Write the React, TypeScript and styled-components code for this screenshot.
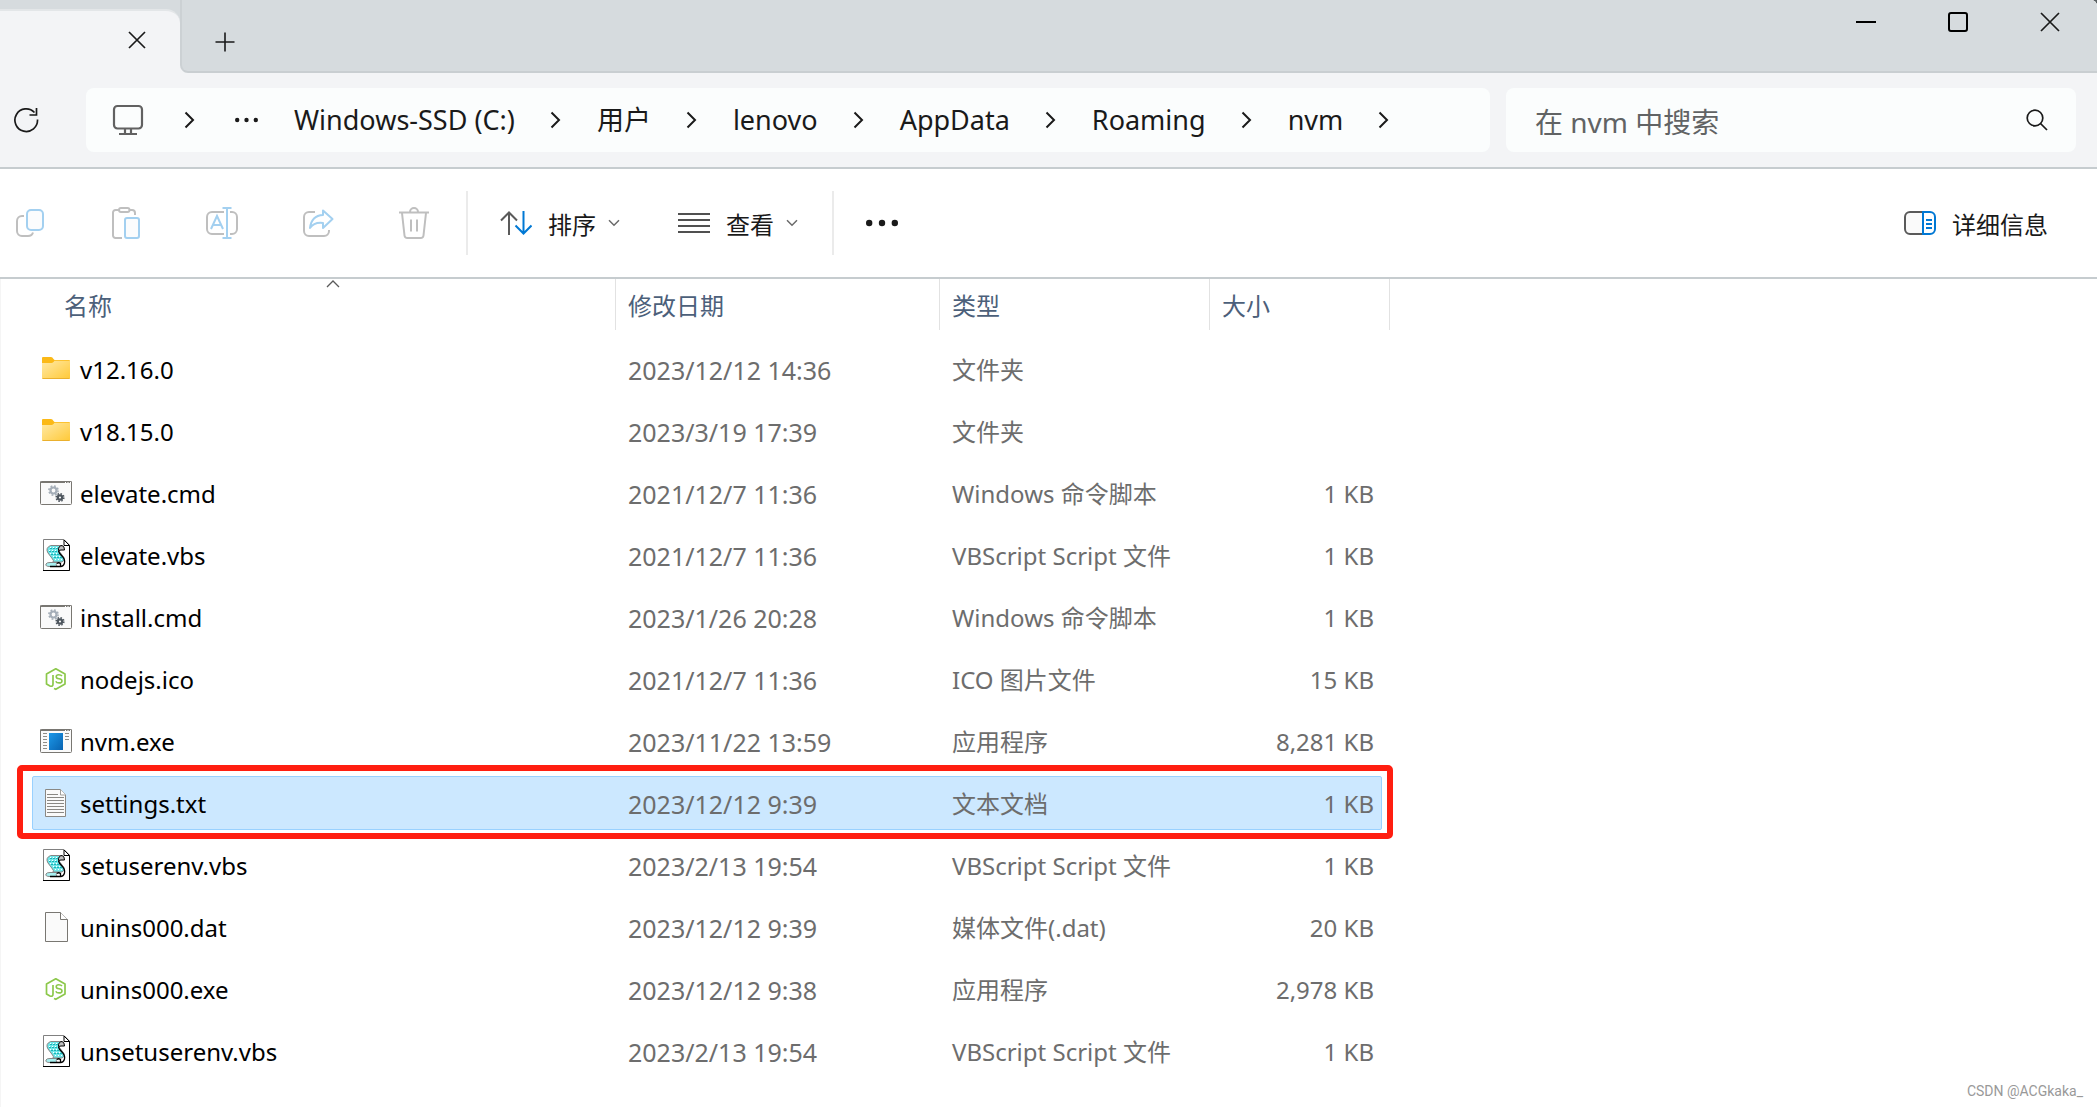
import React from "react";
import styled, { createGlobalStyle, css } from "styled-components";

const uiFont = `"Noto Sans", "Noto Sans CJK SC", sans-serif`;

const GlobalStyle = createGlobalStyle`
  *, *::before, *::after { box-sizing: border-box; }
  html, body, #root { min-height: 100vh; }
  body {
    margin: 0;
    background: #5a6164;
    font-family: ${uiFont};
    font-size: 24px;
    line-height: 32px;
    color: #1a1a1a;
  }
  button, input { font: inherit; color: inherit; }
  svg { display: block; flex: none; }
`;

const Window = styled.div`
  position: relative;
  display: flex;
  flex-direction: column;
  min-height: 100vh;
  overflow: hidden;
  background: #ffffff;
  border-top-right-radius: 6px;
`;

const PlainButton = styled.button`
  display: inline-flex;
  align-items: center;
  justify-content: center;
  margin: 0;
  padding: 0;
  border: 0;
  background: none;
  white-space: nowrap;
`;

const TitleBar = styled.header`
  display: flex;
  align-items: stretch;
  height: 73px;
  background: #f3f4f6;
`;

const TabEdge = styled.div`
  flex: none;
  width: 180px;
  padding-top: 9px;
  background: #d6dbde;
`;

const Tab = styled.div`
  display: flex;
  justify-content: flex-end;
  height: 64px;
  padding: 11px 23px 0 0;
  border-top: 2px solid #e3e6e8;
  border-top-right-radius: 14px;
  background: #f3f4f6;
`;

const TabStrip = styled.div`
  display: flex;
  flex: 1;
  justify-content: space-between;
  border-left: 2px solid #ccd1d4;
  border-bottom: 2px solid #c9ced1;
  border-bottom-left-radius: 8px;
  background: #d6dbde;
`;

const TabButton = styled(PlainButton)`
  width: 40px;
  height: 36px;
`;

const NewTabButton = styled(PlainButton)`
  width: 40px;
  height: 40px;
  margin: 22px 0 0 23px;
`;

const WindowControls = styled.div`
  display: flex;
  height: 44px;
  padding-right: 1px;
`;

const WindowControl = styled(PlainButton)`
  width: 92px;
`;

const AddressRow = styled.div`
  display: grid;
  grid-template-columns: 64px 1404fr 570fr;
  align-items: center;
  gap: 16px;
  height: 96px;
  padding: 0 21px 0 6px;
  border-bottom: 2px solid #c6cccf;
  background: #f3f4f6;
`;

const RefreshButton = styled(PlainButton)`
  width: 40px;
  height: 40px;
`;

const Field = css`
  display: flex;
  align-items: center;
  min-width: 0;
  height: 64px;
  border-radius: 8px;
  background: #fbfdfd;
  line-height: 36px;
`;

const AddressBar = styled.nav`
  ${Field}
  padding-left: 26px;
  overflow: hidden;
  font-size: 27px;
`;

const DeviceButton = styled(PlainButton)`
  margin-right: 40px;
`;

const OverflowButton = styled(PlainButton)`
  margin: 0 36px 0 40px;
`;

const Crumb = styled(PlainButton)`
  padding: 0 35px 0 36px;
  &:first-of-type { padding-left: 0; }
`;

const Crumbs = styled.div`
  display: flex;
  align-items: center;
`;

const SearchBox = styled.label`
  ${Field}
  padding: 0 28px 0 29px;
  font-size: 28px;
`;

const SearchInput = styled.input`
  flex: 1;
  min-width: 0;
  padding: 4px 0 0;
  border: 0;
  outline: 0;
  background: none;
  &::placeholder { color: #616364; opacity: 1; }
`;

const CommandBar = styled.div`
  display: flex;
  align-items: center;
  height: 110px;
  padding: 0 49px 0 10px;
  border-bottom: 2px solid #c6cccf;
`;

const IconGroup = styled.div`
  display: flex;
  gap: 56px;
  margin-right: 32px;
`;

const CommandIcon = styled(PlainButton)`
  width: 40px;
  height: 40px;
`;

const Divider = styled.div`
  width: 2px;
  height: 64px;
  background: #ebebeb;
`;

const MenuGroup = styled.div`
  display: flex;
  gap: 58px;
  padding: 0 34px 0 32px;
`;

const MenuButton = styled(PlainButton)`
  gap: 16px;
`;

const ButtonText = styled.span`
  padding-top: 3px;
`;

const MenuLabel = styled.span`
  display: flex;
  align-items: center;
  gap: 12px;
`;

const MoreButton = styled(PlainButton)`
  margin-left: 32px;
`;

const DetailsButton = styled(MenuButton)`
  margin-left: auto;
`;

const FileArea = styled.main`
  flex: 1;
  padding-bottom: 16px;
  border-left: 1px solid #f5f5f5;
`;

const FileTable = styled.table`
  display: block;
  width: 1389px;
`;

const TableHead = styled.thead`
  display: block;
`;

const HeadRow = styled.tr`
  display: grid;
  grid-template-columns: 615px 324px 270px 1fr;
`;

const HeadCell = styled.th<{ $inset?: boolean }>`
  position: relative;
  height: 51px;
  padding: 11px 0 0 ${(p) => (p.$inset ? "63px" : "12px")};
  border-right: 1px solid #e2e2e2;
  color: #4c607a;
  font-weight: 400;
  text-align: left;
`;

const SortMark = styled.svg`
  position: absolute;
  top: 0;
  left: 50%;
  margin-left: 18px;
`;

const TableBody = styled.tbody`
  display: grid;
  gap: 8px;
  padding: 12px 8px 0 31px;
`;

const Row = styled.tr<{ $selected?: boolean }>`
  position: relative;
  display: grid;
  grid-template-columns: 583px 324px 270px 1fr;
  height: 54px;
  border: 1px solid ${(p) => (p.$selected ? "#99d1ff" : "transparent")};
  border-radius: 2px;
  background: ${(p) => (p.$selected ? "#cce8ff" : "none")};
`;

const Cell = styled.td`
  display: flex;
  align-items: center;
  padding: 2px 0 0 12px;
  color: #6d6d6d;
  white-space: nowrap;
`;

const NameCell = styled(Cell)`
  gap: 8px;
  padding-left: 7px;
  color: #000000;

  svg { margin-top: -2px; }
`;

const DateCell = styled(Cell)`
  font-size: 25px;
`;

const SizeCell = styled(Cell)`
  justify-content: flex-end;
  padding-right: 7px;
`;

const RedFrame = styled.span`
  position: absolute;
  inset: -12px -12px -10px -16px;
  border: 6px solid #ff1e10;
  border-radius: 5px;
  pointer-events: none;
`;

const Watermark = styled.div`
  position: absolute;
  right: 14px;
  bottom: 7px;
  color: #999999;
  font-family: Roboto, sans-serif;
  font-size: 14px;
  line-height: 18px;
`;

const GREY = "#bfbfbf";
const PALE_BLUE = "#a3d0f0";
const DARK = "#1a1a1a";

const Cross = ({ size }: { size: number }) => (
  <svg width={size} height={size} viewBox={`0 0 ${size} ${size}`} stroke={DARK} strokeWidth="1.7">
    <path d={`M1 1L${size - 1} ${size - 1}M${size - 1} 1L1 ${size - 1}`} />
  </svg>
);

const Chevron = () => (
  <svg width="11" height="18" viewBox="0 0 11 18" fill="none" stroke={DARK} strokeWidth="2">
    <path d="M1.5 1.5L9 9L1.5 16.5" />
  </svg>
);

const SmallDown = () => (
  <svg width="12" height="8" viewBox="0 0 12 8" fill="none" stroke="#6a6a6a" strokeWidth="1.5">
    <path d="M1 1.2L6 6.2L11 1.2" />
  </svg>
);

const CopyIcon = () => (
  <svg width="32" height="32" viewBox="0 0 32 32" fill="none" strokeWidth="2">
    <path stroke={GREY} d="M10 9H8a5 5 0 0 0-5 5v10a5 5 0 0 0 5 5h6q4 0 5-3.5" />
    <rect x="13" y="3" width="16" height="20" rx="4" fill="#fbfcfd" stroke={PALE_BLUE} />
  </svg>
);

const PasteIcon = () => (
  <svg width="32" height="32" viewBox="0 0 32 32" fill="none" strokeWidth="2">
    <path stroke={GREY} d="M9 3H5.500a2.500 2.500 0 0 0-2.500 2.500V28.500a2.500 2.500 0 0 0 2.500 2.500H12M19.500 3H22a3 3 0 0 1 3 3v2" />
    <rect stroke={GREY} x="9" y="1" width="10.5" height="4" rx="2" />
    <rect x="15" y="11" width="14" height="20" rx="2" fill="#fbfcfd" stroke={PALE_BLUE} />
  </svg>
);

const RenameIcon = () => (
  <svg width="32" height="32" viewBox="0 0 32 32" fill="none" strokeWidth="2">
    <path stroke={GREY} d="M18 5H6a5 5 0 0 0-5 5v12a5 5 0 0 0 5 5h12M24 5h2a5 5 0 0 1 5 5v12a5 5 0 0 1-5 5h-2" />
    <path stroke={PALE_BLUE} d="M5 22L11 9L17 22M7 18h8M21 1v30M16.5 1h9M16.5 31h9" />
  </svg>
);

const ShareIcon = () => (
  <svg width="32" height="32" viewBox="0 0 32 32" fill="none" strokeWidth="2">
    <path stroke={GREY} d="M13 5H7a5 5 0 0 0-5 5v14a5 5 0 0 0 5 5h15a5 5 0 0 0 5-5v-1" />
    <path stroke={PALE_BLUE} strokeLinejoin="round" d="M21 3.500L30.500 12L21 21V16Q12 15 8 21Q9.500 8.500 21 8Z" />
  </svg>
);

const TrashIcon = () => (
  <svg width="32" height="32" viewBox="0 0 32 32" fill="none" stroke={GREY} strokeWidth="2">
    <path d="M1 5.500h30M12 5a4 4 0 0 1 8 0M4 6l2.500 22.500q.3 2.500 2.800 2.500h13.400q2.500 0 2.800-2.500L28 6M13 12.500v12M19 12.500v12" />
  </svg>
);

const SortIcon = () => (
  <svg width="32" height="32" viewBox="0 0 32 32" fill="none" strokeWidth="2">
    <path stroke="#5a5a5a" d="M9 28V5M1 13.5L9 5.5L17 13.5" />
    <path stroke="#0078d4" d="M23.5 4V27M15.5 18.5L23.5 26.5L31.5 18.5" />
  </svg>
);

const ViewIcon = () => (
  <svg width="32" height="32" viewBox="0 0 32 32" stroke="#505050" strokeWidth="2">
    <path d="M0 7h32M0 13h32M0 19h32M0 25h32" />
  </svg>
);

const DetailsIcon = () => (
  <svg width="32" height="32" viewBox="0 0 32 32" fill="none" strokeWidth="2">
    <path stroke="#5a5a5a" fill="#fafafa" d="M19 5H6a5 5 0 0 0-5 5v12a5 5 0 0 0 5 5h13" />
    <path stroke="#0078d4" d="M19 5h7a5 5 0 0 1 5 5v12a5 5 0 0 1-5 5h-7zM22 13h6M22 17h6M22 21h6" />
  </svg>
);

const Dots = ({ radius, gap }: { radius: number; gap: number }) => {
  const width = gap * 2 + radius * 2;
  return (
    <svg width={width} height="8" viewBox={`0 0 ${width} 8`} fill={DARK}>
      {[0, 1, 2].map((i) => (
        <circle key={i} cx={radius + i * gap} cy="4" r={radius} />
      ))}
    </svg>
  );
};

const FolderIcon = () => (
  <svg width="32" height="32" viewBox="0 0 32 32">
    <defs>
      <linearGradient id="folder" x1="0" y1="0" x2="1" y2="1">
        <stop offset="0" stopColor="#ffe9a6" />
        <stop offset="1" stopColor="#ffc937" />
      </linearGradient>
    </defs>
    <path fill="#fbb917" d="M2 5q0-1 1-1h8q1.500 0 2.500 2l1 1h14.500q1 0 1 1v6H2z" />
    <path fill="url(#folder)" d="M2 10h9.500q1 0 2-1l1-1.200H30V25q0 1-1 1H3q-1 0-1-1z" />
    <path fill="none" stroke="#eab02e" d="M2.500 25.500h27" />
  </svg>
);

const Gear = ({ x, y, r, color }: { x: number; y: number; r: number; color: string }) => (
  <g fill="none" stroke={color}>
    <circle cx={x} cy={y} r={r} strokeWidth="2.2" />
    <circle cx={x} cy={y} r={r + 1.6} strokeWidth="1.6" strokeDasharray={`${(r + 1.6) * 0.393} ${(r + 1.6) * 0.393}`} />
  </g>
);

const AppFrame = ({ children }: { children: React.ReactNode }) => (
  <svg width="32" height="32" viewBox="0 0 32 32">
    <rect x=".5" y="4.5" width="31" height="23" rx="1" fill="#fafafa" stroke="#797772" />
    <path fill="#797772" d="M0 4.500h32v1.500H0z" />
    <path stroke="#ffffff" d="M25 5.500h1M27.500 5.500h1M30 5.500h1" />
    {children}
  </svg>
);

const CmdIcon = () => (
  <AppFrame>
    <Gear x={13.5} y={13.5} r={3} color="#a5aeb8" />
    <Gear x={20} y={20.5} r={2.2} color="#4e565e" />
  </AppFrame>
);

const ExeIcon = () => (
  <AppFrame>
    <defs>
      <linearGradient id="screen" x1="0" y1="0" x2="1" y2="1">
        <stop offset="0" stopColor="#1c98e8" />
        <stop offset="1" stopColor="#0862b0" />
      </linearGradient>
    </defs>
    <rect x="9" y="8" width="14" height="17" fill="url(#screen)" />
    <path stroke="#8f8d88" d="M3 8.500h4M3 11.500h4M3 14.500h4M3 17.500h4M3 20.500h4M3 23.500h4M25 8.500h4M25 11.500h4M25 14.500h4" />
  </AppFrame>
);

const VbsIcon = () => (
  <svg width="32" height="32" viewBox="0 0 32 32">
    <path fill="#ffffff" stroke="#808080" d="M3.500 31.500V.5H24l5.500 5.500v25.500z" />
    <path fill="none" stroke="#000000" d="M3 31.500h26.500V6.500H24V1L29.500 6.500" />
    <path fill="#6fe6e8" stroke="#868686" d="M10.500 6.500h11.500q-4 2-3 5.500l5 6.500q1.500 3-2 4.500h-9q1-1.500-.5-3l-4.500-6q-3-5 2.500-7.500z" />
    <path fill="none" stroke="#18b4b8" strokeDasharray="2 1" d="M10 9.500h8M9 12.500h9M11 15.500h9M14 18.500h8" />
    <path fill="none" stroke="#ffffff" strokeDasharray="1 2" d="M10 8.500h8M9 11.500h9M10 14.500h9M13 17.500h9M15 20.500h8" />
    <path fill="#a8f0f1" stroke="#868686" d="M10 23.500h7q-1.500 2 0 4H10q-5 0-4-2.500.5-1.500 4-1.500z" />
    <path fill="#c0c0c0" stroke="#000000" d="M18.500 11.500Q18 7 22 6.500q2.500.5 2.500 4.500h-3.500z" />
    <path fill="none" stroke="#000000" strokeWidth="1.3" d="M18.500 12q.5 2 3 4.500 4 4 3 7.500-1 3.500-4 3.500H10M17 24.500q1.500-1.500 3.500 0v3" />
  </svg>
);

const NodeIcon = () => (
  <svg width="32" height="32" viewBox="0 0 32 32" fill="none" stroke="#8cc84b" strokeLinejoin="round">
    <path strokeWidth="1.7" d="M14 25.500L15.800 26.300L25 21V11L15.800 5.800L6.500 11V21L10 23q3 1 3-2V12" />
    <path strokeWidth="1.6" d="M22 13q-1-1.300-3.200-1.300-2.600 0-2.600 2 0 1.700 2.800 2 3 .3 3 2.200 0 2-3 2-2.500 0-3.200-1.700" />
  </svg>
);

const TxtIcon = () => (
  <svg width="32" height="32" viewBox="0 0 32 32">
    <path fill="#fafafa" stroke="#8a8884" d="M5.500 2.500H20.500L25.500 8V29.500H5.500z" />
    <path fill="#ffffff" stroke="#a09e9a" d="M20.500 2.500V8h5" />
    <path stroke="#8a8884" d="M7 7.500h11M7 10.500h17M7 13.500h17M7 16.500h17M7 19.500h17M7 22.500h17M7 25.500h17" />
  </svg>
);

const BlankIcon = () => (
  <svg width="32" height="32" viewBox="0 0 32 32" stroke="#797772">
    <path fill="#fafafa" d="M5.500 1.500H20.500L27.500 8.500V30.500H5.500z" />
    <path fill="#ffffff" d="M20.500 1.500V8.500h7" />
  </svg>
);

const icons = {
  folder: FolderIcon,
  cmd: CmdIcon,
  vbs: VbsIcon,
  node: NodeIcon,
  exe: ExeIcon,
  txt: TxtIcon,
  blank: BlankIcon,
};

type FileEntry = {
  icon: keyof typeof icons;
  name: string;
  date: string;
  type: string;
  size: string;
  selected?: boolean;
};

const files: FileEntry[] = [
  { icon: "folder", name: "v12.16.0", date: "2023/12/12 14:36", type: "文件夹", size: "" },
  { icon: "folder", name: "v18.15.0", date: "2023/3/19 17:39", type: "文件夹", size: "" },
  { icon: "cmd", name: "elevate.cmd", date: "2021/12/7 11:36", type: "Windows 命令脚本", size: "1 KB" },
  { icon: "vbs", name: "elevate.vbs", date: "2021/12/7 11:36", type: "VBScript Script 文件", size: "1 KB" },
  { icon: "cmd", name: "install.cmd", date: "2023/1/26 20:28", type: "Windows 命令脚本", size: "1 KB" },
  { icon: "node", name: "nodejs.ico", date: "2021/12/7 11:36", type: "ICO 图片文件", size: "15 KB" },
  { icon: "exe", name: "nvm.exe", date: "2023/11/22 13:59", type: "应用程序", size: "8,281 KB" },
  { icon: "txt", name: "settings.txt", date: "2023/12/12 9:39", type: "文本文档", size: "1 KB", selected: true },
  { icon: "vbs", name: "setuserenv.vbs", date: "2023/2/13 19:54", type: "VBScript Script 文件", size: "1 KB" },
  { icon: "blank", name: "unins000.dat", date: "2023/12/12 9:39", type: "媒体文件(.dat)", size: "20 KB" },
  { icon: "node", name: "unins000.exe", date: "2023/12/12 9:38", type: "应用程序", size: "2,978 KB" },
  { icon: "vbs", name: "unsetuserenv.vbs", date: "2023/2/13 19:54", type: "VBScript Script 文件", size: "1 KB" },
];

const crumbs = ["Windows-SSD (C:)", "用户", "lenovo", "AppData", "Roaming", "nvm"];

const commands = [
  { label: "复制", Icon: CopyIcon },
  { label: "粘贴", Icon: PasteIcon },
  { label: "重命名", Icon: RenameIcon },
  { label: "共享", Icon: ShareIcon },
  { label: "删除", Icon: TrashIcon },
];

export default function App() {
  return (
    <>
      <GlobalStyle />
      <Window>
        <TitleBar>
          <TabEdge>
            <Tab>
              <TabButton aria-label="关闭标签页">
                <Cross size={18} />
              </TabButton>
            </Tab>
          </TabEdge>
          <TabStrip>
            <NewTabButton aria-label="新建标签页">
              <svg width="20" height="20" viewBox="0 0 20 20" stroke={DARK} strokeWidth="1.6">
                <path d="M10 .5v19M.5 10h19" />
              </svg>
            </NewTabButton>
            <WindowControls>
              <WindowControl aria-label="最小化">
                <svg width="20" height="20" viewBox="0 0 20 20" stroke="#000000" strokeWidth="2">
                  <path d="M0 10h20" />
                </svg>
              </WindowControl>
              <WindowControl aria-label="最大化">
                <svg width="20" height="20" viewBox="0 0 20 20" fill="none" stroke="#000000" strokeWidth="2">
                  <rect x="1" y="1" width="18" height="18" rx="2" />
                </svg>
              </WindowControl>
              <WindowControl aria-label="关闭">
                <Cross size={20} />
              </WindowControl>
            </WindowControls>
          </TabStrip>
        </TitleBar>

        <AddressRow>
          <RefreshButton aria-label="刷新">
            <svg width="26" height="26" viewBox="0 0 26 26" fill="none" stroke={DARK} strokeWidth="1.7">
              <path d="M24.500 12.500A11.300 11.300 0 1 1 21.500 5.500M23.500 1V8H16.500" />
            </svg>
          </RefreshButton>
          <AddressBar aria-label="地址">
            <DeviceButton aria-label="此电脑">
              <svg width="32" height="32" viewBox="0 0 32 32" fill="none" stroke="#616161" strokeWidth="2.2">
                <rect x="2" y="2" width="28" height="22.5" rx="3.5" />
                <path d="M13 25v4M19 25v4M7 30h18" />
              </svg>
            </DeviceButton>
            <Chevron />
            <OverflowButton aria-label="更多路径">
              <Dots radius={2.2} gap={9.3} />
            </OverflowButton>
            <Crumbs>
              {crumbs.map((crumb) => (
                <React.Fragment key={crumb}>
                  <Crumb>{crumb}</Crumb>
                  <Chevron />
                </React.Fragment>
              ))}
            </Crumbs>
          </AddressBar>
          <SearchBox>
            <SearchInput type="text" aria-label="搜索" placeholder="在 nvm 中搜索" />
            <svg width="22" height="22" viewBox="0 0 22 22" fill="none" stroke={DARK} strokeWidth="1.7">
              <circle cx="9" cy="9" r="7.8" />
              <path d="M14.500 14.500L21 21" />
            </svg>
          </SearchBox>
        </AddressRow>

        <CommandBar>
          <IconGroup>
            {commands.map(({ label, Icon }) => (
              <CommandIcon key={label} aria-label={label}>
                <Icon />
              </CommandIcon>
            ))}
          </IconGroup>
          <Divider />
          <MenuGroup>
            <MenuButton>
              <SortIcon />
              <MenuLabel>
                <ButtonText>排序</ButtonText>
                <SmallDown />
              </MenuLabel>
            </MenuButton>
            <MenuButton>
              <ViewIcon />
              <MenuLabel>
                <ButtonText>查看</ButtonText>
                <SmallDown />
              </MenuLabel>
            </MenuButton>
          </MenuGroup>
          <Divider />
          <MoreButton aria-label="更多">
            <Dots radius={3.2} gap={12.8} />
          </MoreButton>
          <DetailsButton>
            <DetailsIcon />
            <ButtonText>详细信息</ButtonText>
          </DetailsButton>
        </CommandBar>

        <FileArea>
          <FileTable>
            <TableHead>
              <HeadRow>
                <HeadCell $inset>
                  名称
                  <SortMark width="14" height="9" viewBox="0 0 14 9" fill="none" stroke="#5a5a5a" strokeWidth="1.3">
                    <path d="M1 8L7 2L13 8" />
                  </SortMark>
                </HeadCell>
                <HeadCell>修改日期</HeadCell>
                <HeadCell>类型</HeadCell>
                <HeadCell>大小</HeadCell>
              </HeadRow>
            </TableHead>
            <TableBody>
              {files.map((file) => {
                const Icon = icons[file.icon];
                return (
                  <Row key={file.name} $selected={file.selected}>
                    <NameCell>
                      <Icon />
                      {file.name}
                      {file.selected && <RedFrame />}
                    </NameCell>
                    <DateCell>{file.date}</DateCell>
                    <Cell>{file.type}</Cell>
                    <SizeCell>{file.size}</SizeCell>
                  </Row>
                );
              })}
            </TableBody>
          </FileTable>
        </FileArea>
        <Watermark>CSDN @ACGkaka_</Watermark>
      </Window>
    </>
  );
}
